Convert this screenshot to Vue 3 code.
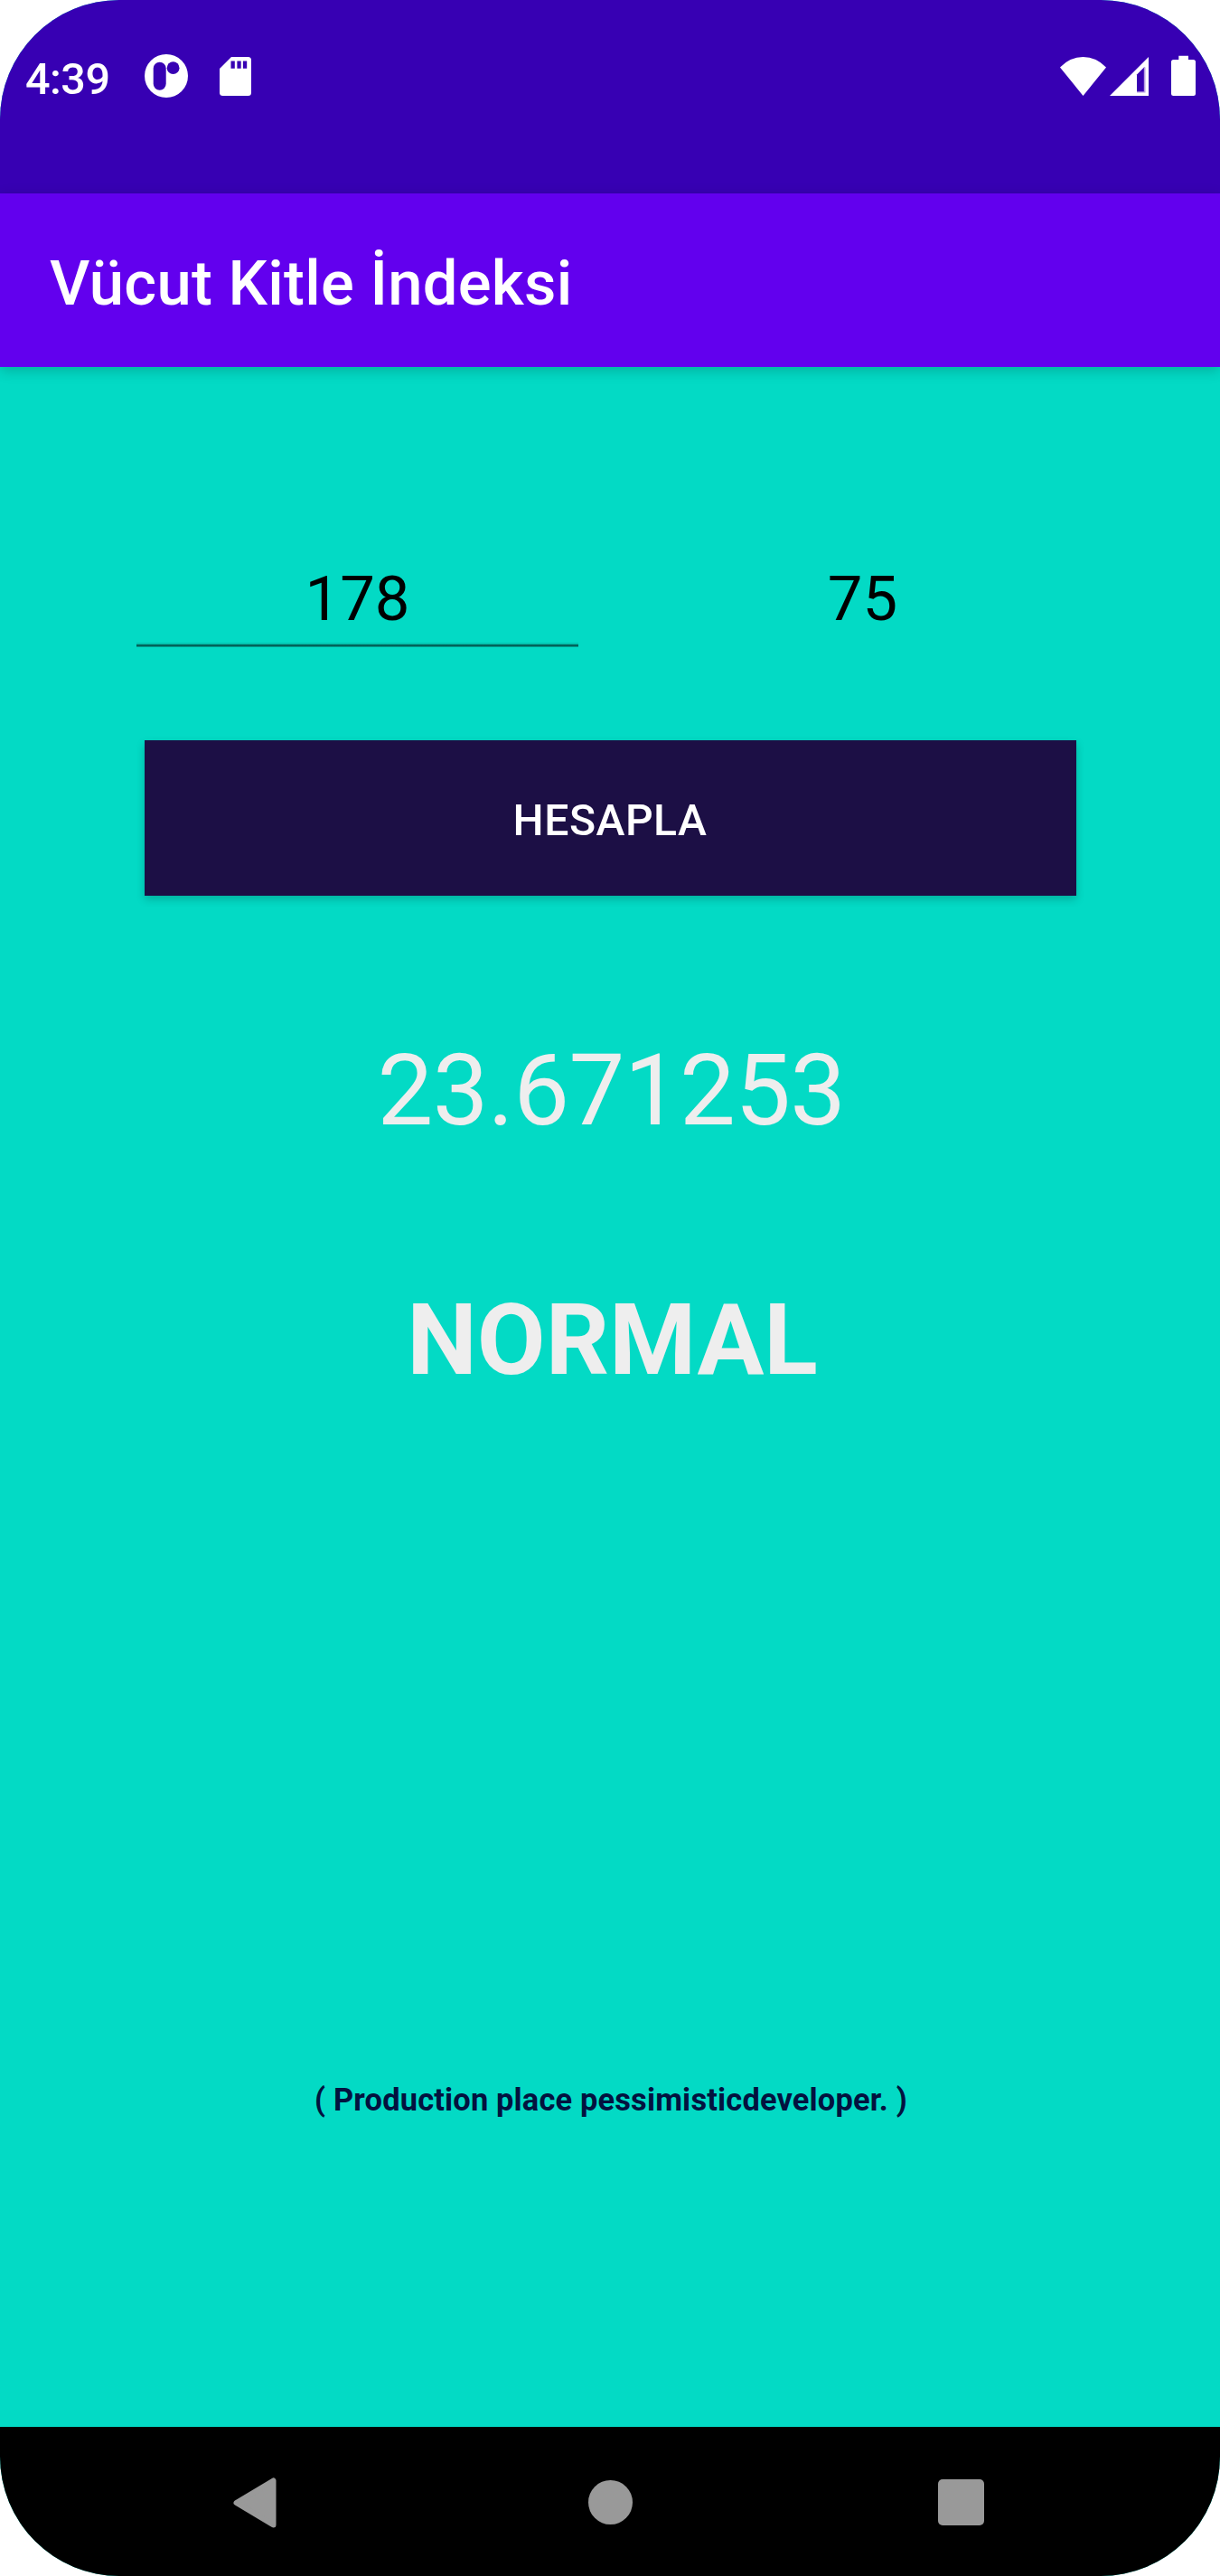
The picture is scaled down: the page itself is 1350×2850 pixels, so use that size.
<script setup>
import { ref } from 'vue'

const height = ref('178')
const weight = ref('75')
const result = ref('23.671253')
const verdict = ref('NORMAL')
</script>

<template>
  <div class="phone">
    <header class="status">
      <span class="clock">4:39</span>
      <svg class="app-icon" width="48" height="48" viewBox="0 0 48 48">
        <circle cx="24" cy="24" r="24" fill="#fff" />
        <rect x="9.7" y="8.8" width="14" height="31" rx="7" fill="#3700b3" />
        <circle cx="31.6" cy="15.2" r="6.9" fill="#3700b3" />
      </svg>
      <svg class="sd-icon" width="35" height="43" viewBox="0 0 35 43">
        <path d="M13 0H31.500Q35 0 35 3.500V39.500Q35 43 31.500 43H3.500Q0 43 0 39.500V13Z" fill="#fff" />
        <path d="M12.500 4.500h4.300v8.300h-4.300zM19.400 4.500h4.300v8.300h-4.300zM25.900 4.500h4.300v8.300h-4.300z" fill="#3700b3" />
      </svg>
      <span class="spacer"></span>
      <svg class="wifi" width="51" height="43" viewBox="0 0 51 43">
        <path d="M0 11.500Q11 0 25.500 0T51 11.500L25.500 43Z" fill="#fff" />
      </svg>
      <svg class="signal" width="43" height="43" viewBox="0 0 43 43">
        <path d="M43 0V43H0Z" fill="#fff" />
        <path d="M30 19.500L38.500 11V39H30Z" fill="#3700b3" />
        <path d="M37.800 11.500h1.700V39.500H30V38.200h7.800Z" fill="#b9a0e3" />
      </svg>
      <svg class="battery" width="27" height="45" viewBox="0 0 27 45">
        <path d="M8.300 .8H19V5H24.500Q27 5 27 7.500V42.500Q27 45 24.500 45H2.500Q0 45 0 42.500V7.500Q0 5 2.500 5H8.300Z" fill="#fff" />
      </svg>
    </header>

    <div class="toolbar"><h1>Vücut Kitle İndeksi</h1></div>

    <main class="content">
      <div class="fields">
        <div class="field focused"><span>{{ height }}</span></div>
        <div class="field"><span>{{ weight }}</span></div>
      </div>
      <button class="calc" type="button">HESAPLA</button>
      <p class="result">{{ result }}</p>
      <p class="verdict">{{ verdict }}</p>
      <p class="credit">( Production place pessimisticdeveloper. )</p>
    </main>

    <nav class="nav">
      <svg class="back" width="48" height="56" viewBox="0 0 48 56">
        <path d="M3.500 28L44.500 3.500V52.500Z" fill="#999" stroke="#999" stroke-width="6" stroke-linejoin="round" />
      </svg>
      <span class="home"></span>
      <span class="recent"></span>
    </nav>
  </div>
</template>

<style>
body {
  margin: 0;
  background: #fff;
}
</style>

<style scoped>
.phone {
  width: 1350px;
  height: 2850px;
  display: flex;
  flex-direction: column;
  overflow: hidden;
  border-radius: 132px;
  background: #03dac5;
  font-family: Roboto, sans-serif;
}

.status {
  box-sizing: border-box;
  flex: none;
  display: flex;
  align-items: flex-start;
  height: 214px;
  padding: 0 27px 0 28px;
  background: #3700b3;
  color: #fff;
}

.status svg {
  flex: none;
  display: block;
}

.clock {
  width: 132px;
  margin-top: 58px;
  font-size: 48.5px;
  font-weight: 500;
  letter-spacing: -0.5px;
  line-height: 60px;
  white-space: nowrap;
}

.app-icon {
  margin-top: 60px;
}

.sd-icon {
  margin: 63px 0 0 35px;
}

.spacer {
  flex: 1;
}

.wifi {
  margin-top: 63px;
}

.signal {
  margin: 63px 0 0 4px;
}

.battery {
  margin: 61px 0 0 25px;
}

.toolbar {
  box-sizing: border-box;
  flex: none;
  display: flex;
  align-items: center;
  position: relative;
  height: 192px;
  padding: 8px 0 0 55px;
  background: #6200ee;
  box-shadow: 0 4px 14px rgba(0, 0, 0, 0.2);
  color: #fff;
}

.toolbar h1 {
  margin: 0;
  font-size: 68.75px;
  font-weight: 500;
  letter-spacing: 0.28px;
  line-height: 90px;
  white-space: nowrap;
}

.content {
  flex: 1;
  display: flex;
  flex-direction: column;
  align-items: center;
  padding-top: 208px;
}

.fields {
  display: flex;
  justify-content: space-between;
  width: 1048px;
}

.field {
  width: 489px;
  height: 102px;
  color: #000;
  font-size: 68.75px;
  line-height: 97px;
  text-align: center;
}

.field.focused {
  background: linear-gradient(
    #0000 97px,
    rgba(0, 0, 0, 0.1) 97px 99px,
    rgba(0, 0, 0, 0.55) 99px 101px,
    rgba(0, 0, 0, 0.3) 101px
  );
}

.calc {
  width: 1031px;
  height: 172px;
  margin: 103px 0 0;
  padding: 5px 0 0;
  border: 0;
  background: #1c0f45;
  box-shadow: 0 4px 9px rgba(0, 0, 0, 0.2);
  color: #fff;
  font-family: inherit;
  font-size: 48.1px;
  font-weight: 500;
  letter-spacing: 0.5px;
}

.content p {
  margin: 0;
  white-space: nowrap;
}

.content .result {
  margin-top: 151px;
  padding-left: 3px;
  color: #eee;
  font-size: 110px;
  letter-spacing: -0.6px;
  line-height: 130px;
}

.content .verdict {
  margin-top: 146px;
  padding-left: 5px;
  color: #eee;
  font-size: 110px;
  font-weight: 700;
  line-height: 130px;
}

.content .credit {
  margin-top: 755px;
  padding-left: 2px;
  color: #03123f;
  font-size: 34.4px;
  font-weight: 700;
  letter-spacing: 0.17px;
  line-height: 40px;
}

.nav {
  box-sizing: border-box;
  flex: none;
  display: flex;
  align-items: center;
  height: 165px;
  padding: 2px 0 0 258px;
  background: #000;
}

.home {
  width: 49px;
  height: 49px;
  margin-left: 345px;
  border-radius: 50%;
  background: #999;
}

.recent {
  width: 51px;
  height: 51px;
  margin-left: 338px;
  border-radius: 5px;
  background: #999;
}
</style>
